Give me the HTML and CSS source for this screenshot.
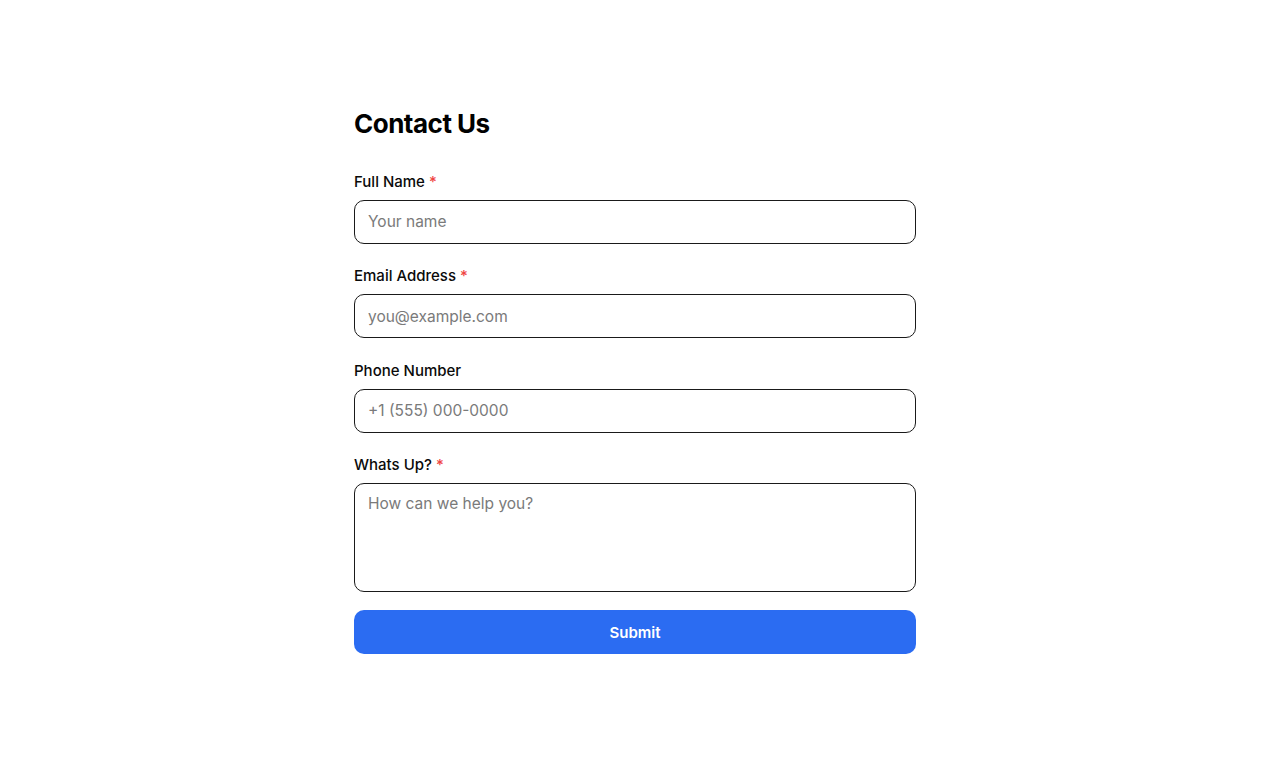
FILE: index.html
```html
<!DOCTYPE html>
<html lang="en">
<head>
<meta charset="utf-8">
<title>Contact Us</title>
<link rel="stylesheet" href="styles.css">
</head>
<body>
<main class="page">
  <form class="contact-form">
    <h1 class="title">Contact Us</h1>
    <div class="fields">
      <div class="field">
        <label class="label" for="name">Full Name <span class="req">*</span></label>
        <input class="input" id="name" type="text" placeholder="Your name">
      </div>
      <div class="field">
        <label class="label" for="email">Email Address <span class="req">*</span></label>
        <input class="input" id="email" type="email" placeholder="you@example.com">
      </div>
      <div class="field">
        <label class="label" for="phone">Phone Number</label>
        <input class="input" id="phone" type="tel" placeholder="+1 (555) 000-0000">
      </div>
      <div class="field">
        <label class="label" for="msg">Whats Up? <span class="req">*</span></label>
        <textarea class="input textarea" id="msg" placeholder="How can we help you?"></textarea>
      </div>
    </div>
    <button class="submit" type="button">Submit</button>
  </form>
</main>
</body>
</html>
```
FILE: styles.css
```css
* { box-sizing: border-box; }
html, body { margin: 0; padding: 0; background: #ffffff; }
body {
  font-family: Inter, "Noto Sans", "Liberation Sans", sans-serif;
  color: #0a0a0a;
}
.page {
  height: 760px;
  display: flex;
  align-items: center;
  justify-content: center;
}
.contact-form {
  width: 562px;
  display: flex;
  flex-direction: column;
}
.title {
  margin: 0 0 29px;
  font-size: 26px;
  line-height: 35px;
  font-weight: 700;
  letter-spacing: -0.5px;
  color: #000;
}
.fields {
  display: flex;
  flex-direction: column;
  gap: 20.4px;
}
.field {
  display: flex;
  flex-direction: column;
  gap: 7px;
}
.label {
  padding-top: 1px;
  font-size: 15px;
  line-height: 22px;
  font-weight: 500;
  color: #0a0a0a;
}
.req { color: #ef4444; }
.input {
  display: block;
  width: 100%;
  height: 44px;
  padding: 0 13px;
  border: 1px solid #1a1a1a;
  border-radius: 10px;
  font-family: inherit;
  font-size: 15.5px;
  color: #111;
  background: #fff;
  outline: none;
}
.input::placeholder { color: #7a7a7a; }
.textarea {
  height: 109px;
  padding: 9px 13px;
  resize: none;
  line-height: 22px;
}
.submit {
  margin-top: 18px;
  height: 44px;
  width: 100%;
  border: none;
  border-radius: 10px;
  background: #2b6cf2;
  color: #fff;
  font-family: inherit;
  font-size: 15px;
  font-weight: 600;
  cursor: pointer;
}
```
